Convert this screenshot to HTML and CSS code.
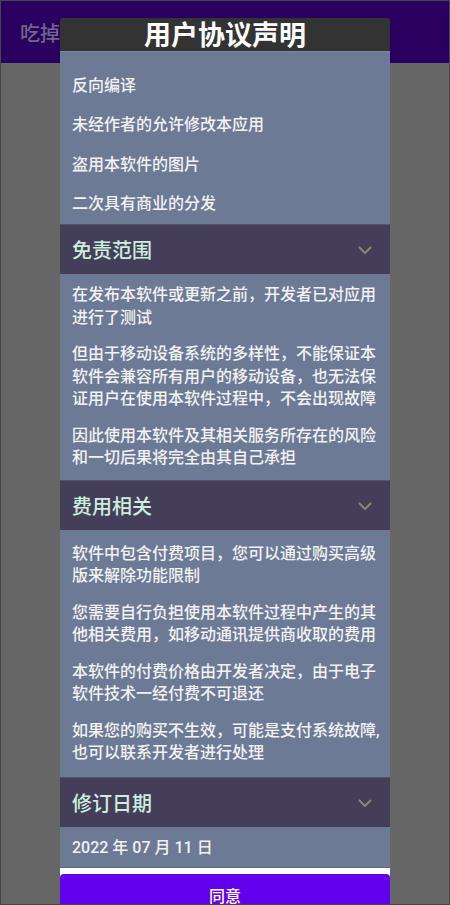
FILE: index.html
```html
<!DOCTYPE html>
<html lang="zh-CN">
<head>
<meta charset="utf-8">
<title>用户协议声明</title>
<link rel="stylesheet" href="styles.css">
</head>
<body>
<div class="screen">
  <header class="appbar"><span class="app-title">吃掉它</span></header>
  <div class="dialog">
    <div class="dialog-title">用户协议声明</div>
    <div class="dialog-body">
      <div class="list">
        <div class="item">反向编译</div>
        <div class="item">未经作者的允许修改本应用</div>
        <div class="item">盗用本软件的图片</div>
        <div class="item">二次具有商业的分发</div>
      </div>

      <div class="sec-head">
        <span>免责范围</span>
        <svg class="chev" width="14" height="8" viewBox="0 0 14 8"><polyline points="1,1 7,7 13,1" fill="none" stroke="#8c8b7b" stroke-width="1.8"/></svg>
      </div>
      <div class="section">
        <p class="para">在发布本软件或更新之前，开发者已对应用进行了测试</p>
        <p class="para">但由于移动设备系统的多样性，不能保证本软件会兼容所有用户的移动设备，也无法保证用户在使用本软件过程中，不会出现故障</p>
        <p class="para">因此使用本软件及其相关服务所存在的风险和一切后果将完全由其自己承担</p>
      </div>

      <div class="sec-head">
        <span>费用相关</span>
        <svg class="chev" width="14" height="8" viewBox="0 0 14 8"><polyline points="1,1 7,7 13,1" fill="none" stroke="#8c8b7b" stroke-width="1.8"/></svg>
      </div>
      <div class="section section-wide">
        <p class="para">软件中包含付费项目，您可以通过购买高级版来解除功能限制</p>
        <p class="para">您需要自行负担使用本软件过程中产生的其他相关费用，如移动通讯提供商收取的费用</p>
        <p class="para">本软件的付费价格由开发者决定，由于电子软件技术一经付费不可退还</p>
        <p class="para">如果您的购买不生效，可能是支付系统故障,也可以联系开发者进行处理</p>
      </div>

      <div class="sec-head">
        <span>修订日期</span>
        <svg class="chev" width="14" height="8" viewBox="0 0 14 8"><polyline points="1,1 7,7 13,1" fill="none" stroke="#8c8b7b" stroke-width="1.8"/></svg>
      </div>
      <div class="date-row">2022 年 07 月 11 日</div>
    </div>
    <div class="dialog-foot">
      <div class="agree-btn">同意</div>
    </div>
  </div>
</div>
</body>
</html>
```
FILE: styles.css
```css
html, body {
  margin: 0;
  padding: 0;
}

body {
  font-family: Roboto, "Noto Sans CJK SC", sans-serif;
}

.screen {
  position: relative;
  width: 450px;
  height: 905px;
  box-sizing: border-box;
  border: 1px solid #474747;
  background: #666666;
  overflow: hidden;
}

.appbar {
  height: 62px;
  background: #290060;
  display: flex;
  align-items: center;
  padding-left: 19px;
}

.app-title {
  font-size: 20px;
  font-weight: 500;
  color: #6d6888;
}

.dialog {
  position: absolute;
  top: 17px;
  left: 59px;
  width: 330px;
  bottom: -60px;
  display: flex;
  flex-direction: column;
  border-radius: 3px 3px 0 0;
  overflow: hidden;
}

.dialog-title {
  height: 33px;
  line-height: 36px;
  background: #333333;
  border-bottom: 1px solid #80869a;
  color: #ffffff;
  font-size: 27px;
  font-weight: 700;
  text-align: center;
}

.dialog-body {
  background: #6c7a96;
  color: #f2f2f2;
  font-size: 16px;
  font-weight: 500;
}

.list {
  padding-top: 14px;
}

.item {
  padding: 8.5px 8px 8.5px 12px;
  line-height: 22.5px;
}

.sec-head {
  height: 50px;
  box-sizing: border-box;
  border-top: 1px solid #57536d;
  background: #443e58;
  display: flex;
  align-items: center;
  justify-content: space-between;
  padding: 0 18px 0 12px;
  font-size: 20px;
  color: #cdeedf;
}

.chev {
  display: block;
}

.section {
  padding: 3px 0 3.5px;
}

.section-wide {
  padding: 5.5px 0;
}

.para {
  margin: 0;
  padding: 7px 8px 7px 12px;
  line-height: 22.5px;
}

.date-row {
  padding: 10px 8px 7px 12px;
  line-height: 22.5px;
  border-bottom: 1px solid #5a6682;
}

.dialog-foot {
  background: #ffffff;
  padding-top: 6px;
}

.agree-btn {
  height: 44px;
  line-height: 46px;
  background: #6200ee;
  border-radius: 4px 4px 0 0;
  color: #ffffff;
  font-size: 16px;
  font-weight: 500;
  text-align: center;
}
```
